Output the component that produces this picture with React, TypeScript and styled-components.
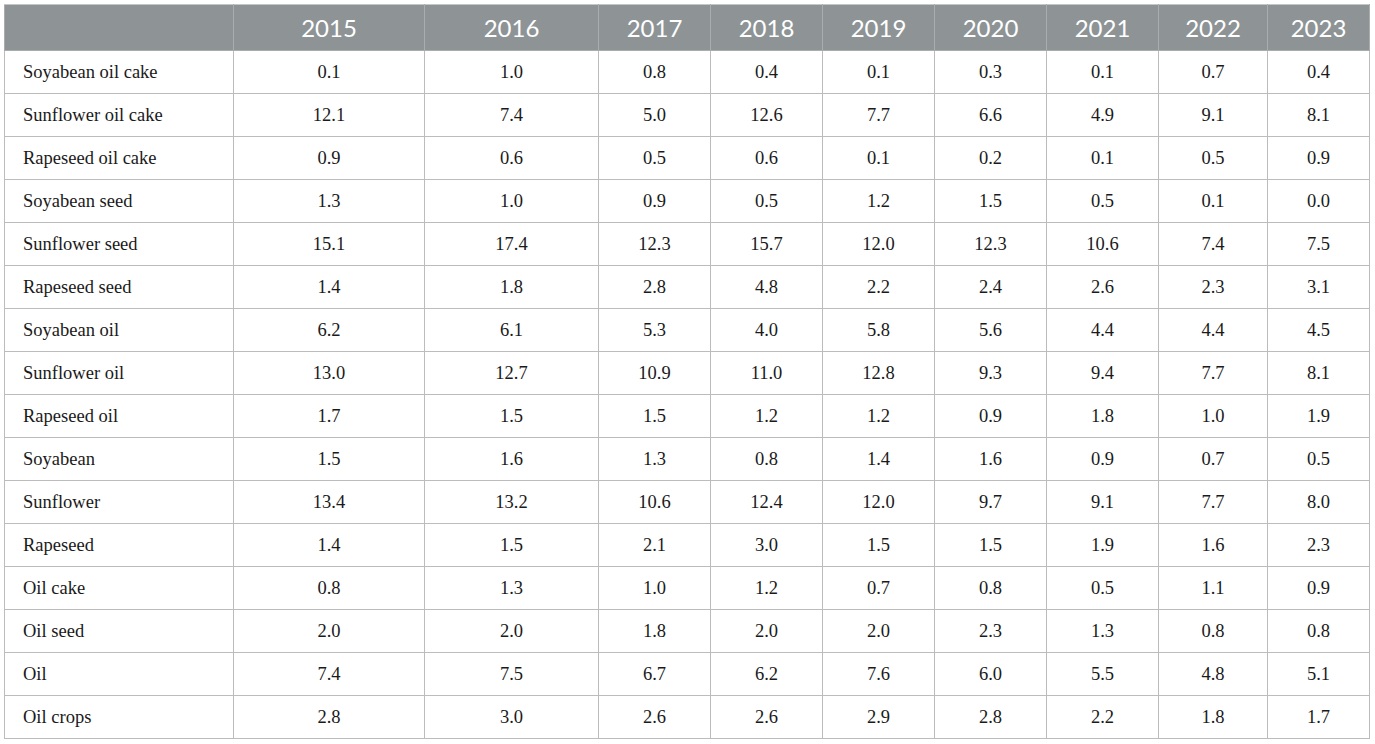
import styled, { createGlobalStyle } from "styled-components";

const YEARS = ["2015", "2016", "2017", "2018", "2019", "2020", "2021", "2022", "2023"];
const COL_WIDTHS = [229, 191, 174, 112, 112, 112, 112, 112, 109, 102];

const ROWS: [string, string[]][] = [
  ["Soyabean oil cake", ["0.1", "1.0", "0.8", "0.4", "0.1", "0.3", "0.1", "0.7", "0.4"]],
  ["Sunflower oil cake", ["12.1", "7.4", "5.0", "12.6", "7.7", "6.6", "4.9", "9.1", "8.1"]],
  ["Rapeseed oil cake", ["0.9", "0.6", "0.5", "0.6", "0.1", "0.2", "0.1", "0.5", "0.9"]],
  ["Soyabean seed", ["1.3", "1.0", "0.9", "0.5", "1.2", "1.5", "0.5", "0.1", "0.0"]],
  ["Sunflower seed", ["15.1", "17.4", "12.3", "15.7", "12.0", "12.3", "10.6", "7.4", "7.5"]],
  ["Rapeseed seed", ["1.4", "1.8", "2.8", "4.8", "2.2", "2.4", "2.6", "2.3", "3.1"]],
  ["Soyabean oil", ["6.2", "6.1", "5.3", "4.0", "5.8", "5.6", "4.4", "4.4", "4.5"]],
  ["Sunflower oil", ["13.0", "12.7", "10.9", "11.0", "12.8", "9.3", "9.4", "7.7", "8.1"]],
  ["Rapeseed oil", ["1.7", "1.5", "1.5", "1.2", "1.2", "0.9", "1.8", "1.0", "1.9"]],
  ["Soyabean", ["1.5", "1.6", "1.3", "0.8", "1.4", "1.6", "0.9", "0.7", "0.5"]],
  ["Sunflower", ["13.4", "13.2", "10.6", "12.4", "12.0", "9.7", "9.1", "7.7", "8.0"]],
  ["Rapeseed", ["1.4", "1.5", "2.1", "3.0", "1.5", "1.5", "1.9", "1.6", "2.3"]],
  ["Oil cake", ["0.8", "1.3", "1.0", "1.2", "0.7", "0.8", "0.5", "1.1", "0.9"]],
  ["Oil seed", ["2.0", "2.0", "1.8", "2.0", "2.0", "2.3", "1.3", "0.8", "0.8"]],
  ["Oil", ["7.4", "7.5", "6.7", "6.2", "7.6", "6.0", "5.5", "4.8", "5.1"]],
  ["Oil crops", ["2.8", "3.0", "2.6", "2.6", "2.9", "2.8", "2.2", "1.8", "1.7"]],
];

const GlobalStyle = createGlobalStyle`
  body {
    margin: 0;
    background: #fff;
  }
`;

const Page = styled.div`
  padding: 4px;
`;

const Table = styled.table`
  width: 1366px;
  table-layout: fixed;
  border-collapse: collapse;
  border: 1px solid #c4c8c4;
`;

const HeadCell = styled.th`
  height: 45px;
  padding: 0;
  background: #8e9496;
  color: #fff;
  font-family: Lato, "Open Sans", sans-serif;
  font-size: 24px;
  font-weight: 400;
  text-align: center;
  border: 1px solid #a8adae;
  border-top-color: #c4c8c4;
`;

const Cell = styled.td<{ $label?: boolean }>`
  height: 42px;
  padding: ${(p) => (p.$label ? "0 0 0 18px" : "0")};
  font-family: "Liberation Serif", "Times New Roman", serif;
  font-size: 18.5px;
  color: #1a1a1a;
  text-align: ${(p) => (p.$label ? "left" : "center")};
  border: 1px solid #bcbcbc;
`;

export default function App() {
  return (
    <Page>
      <GlobalStyle />
      <Table>
        <colgroup>
          {COL_WIDTHS.map((w, i) => (
            <col key={i} style={{ width: w }} />
          ))}
        </colgroup>
        <thead>
          <tr>
            <HeadCell />
            {YEARS.map((y) => (
              <HeadCell key={y}>{y}</HeadCell>
            ))}
          </tr>
        </thead>
        <tbody>
          {ROWS.map(([name, values]) => (
            <tr key={name}>
              <Cell $label>{name}</Cell>
              {values.map((v, i) => (
                <Cell key={i}>{v}</Cell>
              ))}
            </tr>
          ))}
        </tbody>
      </Table>
    </Page>
  );
}
